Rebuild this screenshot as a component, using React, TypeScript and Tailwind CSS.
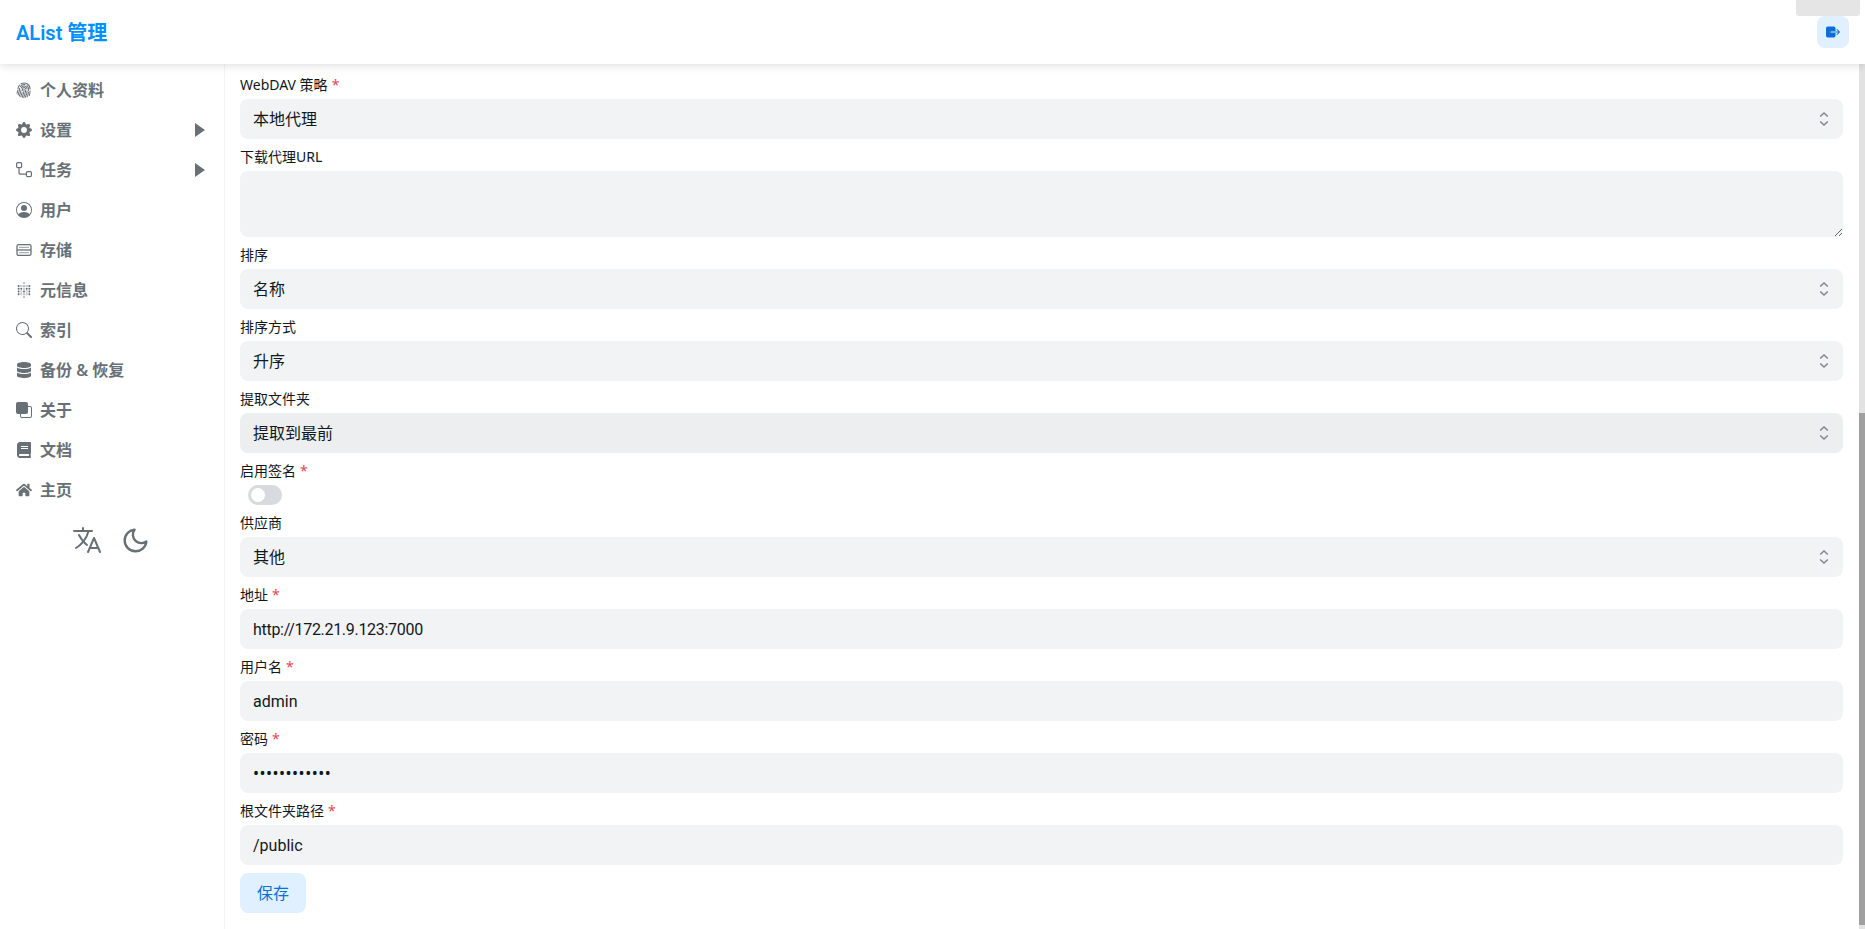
import React from 'react';
import { BsFingerprint, BsGearFill, BsPersonCircle, BsSearch, BsFront } from 'react-icons/bs';
import { SiMetabase } from 'react-icons/si';
import { FaDatabase, FaBook, FaHome } from 'react-icons/fa';
import { IoLanguageOutline, IoExit } from 'react-icons/io5';
import { FiMoon } from 'react-icons/fi';

const RouteIcon = () => (
    <svg width="16" height="16" viewBox="0 0 16 16" fill="none" stroke="currentColor" strokeWidth="1.2">
        <rect x="0.6" y="0.6" width="5" height="5" rx="1.2" />
        <rect x="10.4" y="9.6" width="5" height="5" rx="1.2" />
        <path d="M3 5.6v4.6a2 2 0 0 0 2 2h5.4" />
    </svg>
);

const StorageIcon = () => (
    <svg width="16" height="16" viewBox="0 0 16 16" fill="none" stroke="currentColor" strokeWidth="1.3">
        <rect x="1" y="2.6" width="14" height="10.8" rx="1.6" />
        <path d="M1 8h14" />
        <path d="M3 5.3h10M3 10.7h10" strokeOpacity="0.7" strokeWidth="1" />
    </svg>
);

const Caret = () => (
    <svg width="10" height="14" viewBox="0 0 10 14" fill="currentColor">
        <path d="M0 0l10 7-10 7z" />
    </svg>
);

const UpDown = () => (
    <svg width="10" height="14" viewBox="0 0 10 14" fill="none" stroke="#7e868c" strokeWidth="1.4">
        <path d="M1.2 4.6L5 1l3.8 3.6M1.2 9.4L5 13l3.8-3.6" />
    </svg>
);

const menu: { label: string; icon: JSX.Element; arrow?: boolean }[] = [
    { label: '个人资料', icon: <BsFingerprint size={16} /> },
    { label: '设置', icon: <BsGearFill size={16} />, arrow: true },
    { label: '任务', icon: <RouteIcon />, arrow: true },
    { label: '用户', icon: <BsPersonCircle size={16} /> },
    { label: '存储', icon: <StorageIcon /> },
    { label: '元信息', icon: <SiMetabase size={16} /> },
    { label: '索引', icon: <BsSearch size={16} /> },
    { label: '备份 & 恢复', icon: <FaDatabase size={16} /> },
    { label: '关于', icon: <BsFront size={16} /> },
    { label: '文档', icon: <FaBook size={16} /> },
    { label: '主页', icon: <FaHome size={16} /> },
];

const Label = ({ text, required }: { text: string; required?: boolean }) => (
    <div className="h-5 mb-1 text-sm leading-5 font-normal text-[#11181c]">
        {text}
        {required && <span className="ml-1 text-[#e5484d]">*</span>}
    </div>
);

const SelectField = ({ label, value, required, hover }: { label: string; value: string; required?: boolean; hover?: boolean }) => (
    <div>
        <Label text={label} required={required} />
        <div className={`flex items-center justify-between h-10 pl-[13px] pr-[14px] rounded-lg text-base text-[#11181c] ${hover ? 'bg-[#eceef0]' : 'bg-[#f1f3f5]'}`}>
            <span>{value}</span>
            <UpDown />
        </div>
    </div>
);

const InputField = ({ label, value, type, textClass }: { label: string; value: string; type?: string; textClass?: string }) => (
    <div>
        <Label text={label} required />
        <input
            type={type ?? 'text'}
            value={value}
            readOnly
            className={`block w-full h-10 px-[13px] rounded-lg bg-[#f1f3f5] text-base text-[#11181c] outline-none ${textClass ?? "font-['Roboto',sans-serif]"}`}
        />
    </div>
);

export default function App() {
    return (
        <div className="relative flex flex-col h-[929px] overflow-hidden bg-white font-['Noto_Sans','Noto_Sans_CJK_SC',sans-serif]">
            <header className="relative z-10 flex items-center justify-between h-16 shrink-0 pl-4 pr-4 bg-white shadow-[0_2px_8px_rgba(0,0,0,0.12)]">
                <span className="pt-[2px] text-xl font-semibold text-[#0091ff] font-['Roboto','Noto_Sans_CJK_SC',sans-serif]">AList 管理</span>
                <button className="flex items-center justify-center w-8 h-8 rounded-lg bg-[#e1f0ff] text-[#0a6fdc]">
                    <IoExit size={16} />
                </button>
            </header>
            <div className="absolute z-20 top-0 left-[1796px] w-16 h-4 rounded-b-[3px] bg-[#e5e5e5]" />
            <div className="flex flex-1 min-h-0">
                <aside className="w-[225px] shrink-0 pt-[6px] border-r border-[#f1f3f5] text-[#687076]">
                    {menu.map(item => (
                        <div key={item.label} className="flex items-center h-10 pl-4 pr-[19px]">
                            <span className="w-4 h-4 mr-2 shrink-0">{item.icon}</span>
                            <span className="flex-1 text-base font-semibold">{item.label}</span>
                            {item.arrow && <Caret />}
                        </div>
                    ))}
                    <div className="flex items-center justify-center gap-[18px] mt-[14px] pr-[3px]">
                        <IoLanguageOutline size={32} />
                        <FiMoon size={29} />
                    </div>
                </aside>
                <main className="flex-1 min-w-0 pt-[11px] pl-[15px] pr-[16px]">
                    <div className="flex flex-col gap-2">
                        <SelectField label="WebDAV 策略" value="本地代理" required />
                        <div>
                            <Label text="下载代理URL" />
                            <textarea readOnly className="block w-full h-[66px] rounded-lg bg-[#f1f3f5] outline-none" />
                        </div>
                        <SelectField label="排序" value="名称" />
                        <SelectField label="排序方式" value="升序" />
                        <SelectField label="提取文件夹" value="提取到最前" hover />
                        <div>
                            <Label text="启用签名" required />
                            <div className="flex items-center w-[34px] h-5 ml-2 px-[3px] rounded-full bg-[#d7dbdf]">
                                <span className="w-[14px] h-[14px] rounded-full bg-white" />
                            </div>
                        </div>
                        <SelectField label="供应商" value="其他" />
                        <InputField label="地址" value="http://172.21.9.123:7000" textClass="font-['Roboto',sans-serif] tracking-[-0.3px]" />
                        <InputField label="用户名" value="admin" />
                        <InputField label="密码" value="************" type="password" textClass="tracking-[0.5px]" />
                        <InputField label="根文件夹路径" value="/public" />
                        <button className="w-[66px] h-10 rounded-lg bg-[#e1f0ff] text-base text-[#0a6fdc]">保存</button>
                    </div>
                </main>
                <div className="flex flex-col w-[6px] shrink-0 bg-[#e2e2e2]">
                    <div className="h-[349px] shrink-0" />
                    <div className="h-[512px] shrink-0 bg-[#a0a0a0]" />
                </div>
            </div>
        </div>
    );
}
